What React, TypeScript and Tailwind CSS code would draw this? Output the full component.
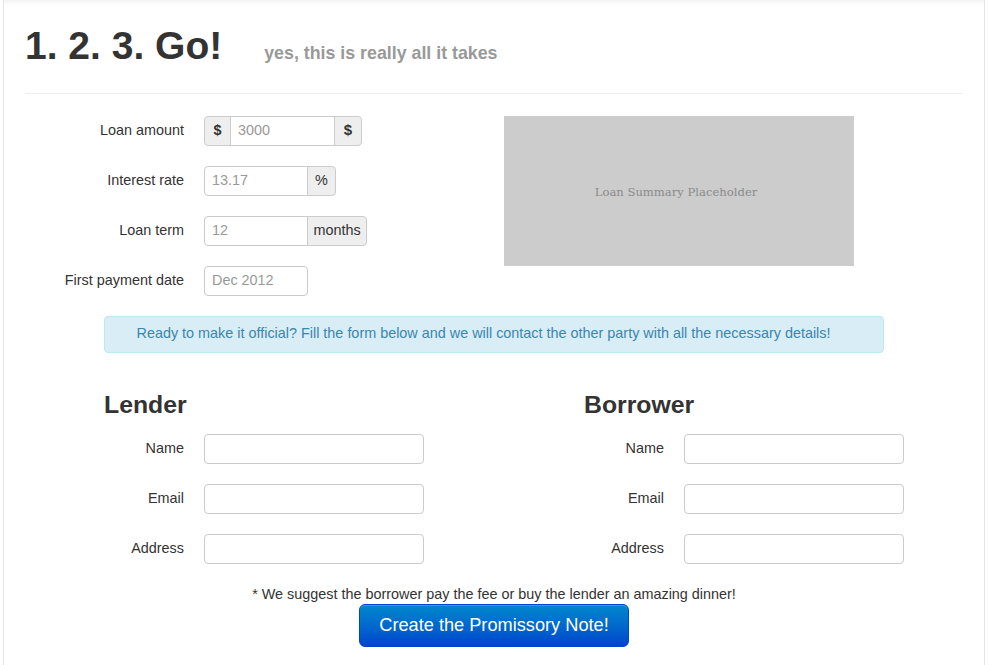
import React from 'react';

const font = { fontFamily: '"Liberation Sans", Arial, sans-serif' };

function Addon({ children, className = '' }: { children: React.ReactNode; className?: string }) {
  return (
    <span className={`flex h-[30px] items-center justify-center border border-[#ccc] bg-[#eee] text-[14.4px] text-[#333] ${className}`}>
      {children}
    </span>
  );
}

function TextBox({ value, className = '' }: { value?: string; className?: string }) {
  return (
    <div className={`flex h-[30px] items-center border border-[#ccc] bg-white px-[7px] text-[14.4px] text-[#999] ${className}`}>
      {value}
    </div>
  );
}

function Row({ label, children }: { label: string; children: React.ReactNode }) {
  return (
    <div className="flex h-[30px] items-center">
      <label className="w-[159px] text-right text-[14.4px] text-[#333]">{label}</label>
      <div className="ml-[20px] flex">{children}</div>
    </div>
  );
}

function Party({ title, className = '' }: { title: string; className?: string }) {
  return (
    <div className={className}>
      <h3 className="h-[30px] text-[24.8px] font-bold leading-[30px] text-[#333]">{title}</h3>
      <div className="mt-[14px] flex flex-col gap-[20px]">
        {['Name', 'Email', 'Address'].map((f) => (
          <div key={f} className="flex h-[30px] items-center">
            <label className="w-[80px] text-right text-[14.4px] text-[#333]">{f}</label>
            <TextBox className="ml-[20px] w-[220px] rounded-[4px]" />
          </div>
        ))}
      </div>
    </div>
  );
}

export default function App() {
  return (
    <div className="min-h-[665px] w-[988px] bg-white" style={font}>
      <div className="ml-[3px] min-h-[665px] w-[982px] border-x border-[#e6e6e6] px-[21px] pb-4 shadow-[inset_0_7px_6px_-6px_rgba(0,0,0,0.08)]">
        <div className="flex items-baseline border-b border-[#eee] pt-[26px] pb-[26px]">
          <h1 className="text-[39px] font-bold leading-[40px] text-[#333]">1. 2. 3. Go!</h1>
          <span className="ml-[42px] text-[17.8px] font-bold text-[#999]">yes, this is really all it takes</span>
        </div>

        <div className="mt-[22px] flex">
          <div className="flex w-[479px] flex-col gap-[20px]">
            <Row label="Loan amount">
              <Addon className="w-[27px] rounded-l-[4px] font-semibold">$</Addon>
              <TextBox value="3000" className="-ml-px w-[105px]" />
              <Addon className="-ml-px w-[28px] rounded-r-[4px] text-[15px] font-bold">$</Addon>
            </Row>
            <Row label="Interest rate">
              <TextBox value="13.17" className="w-[104px] rounded-l-[4px]" />
              <Addon className="-ml-px w-[29px] rounded-r-[4px]">%</Addon>
            </Row>
            <Row label="Loan term">
              <TextBox value="12" className="w-[104px] rounded-l-[4px]" />
              <Addon className="-ml-px w-[60px] rounded-r-[4px]">months</Addon>
            </Row>
            <Row label="First payment date">
              <TextBox value="Dec 2012" className="w-[104px] rounded-[4px]" />
            </Row>
          </div>
          <div className="flex h-[150px] w-[350px] items-center justify-center bg-[#ccc] pt-[4px] pr-[6px]">
            <span
              className="text-[11.6px] text-[#8a8a8a]"
              style={{ fontFamily: '"DejaVu Serif", "Liberation Serif", serif' }}
            >
              Loan Summary Placeholder
            </span>
          </div>
        </div>

        <div className="ml-[79px] mt-[20px] flex h-[37px] w-[780px] items-center justify-center rounded-[4px] border border-[#bce8f1] bg-[#d9edf7] pr-[21px] text-[14.4px] text-[#3a87ad]">
          Ready to make it official? Fill the form below and we will contact the other party with all the necessary details!
        </div>

        <div className="mt-[37px] flex pl-[79px]">
          <Party title="Lender" className="w-[480px] shrink-0" />
          <Party title="Borrower" className="flex-1" />
        </div>

        <p className="mt-[20px] text-center text-[14.4px] leading-[20px] text-[#333]">
          * We suggest the borrower pay the fee or buy the lender an amazing dinner!
        </p>
        <div className="flex justify-center">
          <button className="h-[43px] w-[270px] rounded-[6px] border border-[#0044cc] bg-gradient-to-b from-[#0088cc] to-[#0044cc] text-[18.2px] text-white shadow-[inset_0_1px_0_rgba(255,255,255,0.2)]">
            Create the Promissory Note!
          </button>
        </div>
      </div>
    </div>
  );
}
